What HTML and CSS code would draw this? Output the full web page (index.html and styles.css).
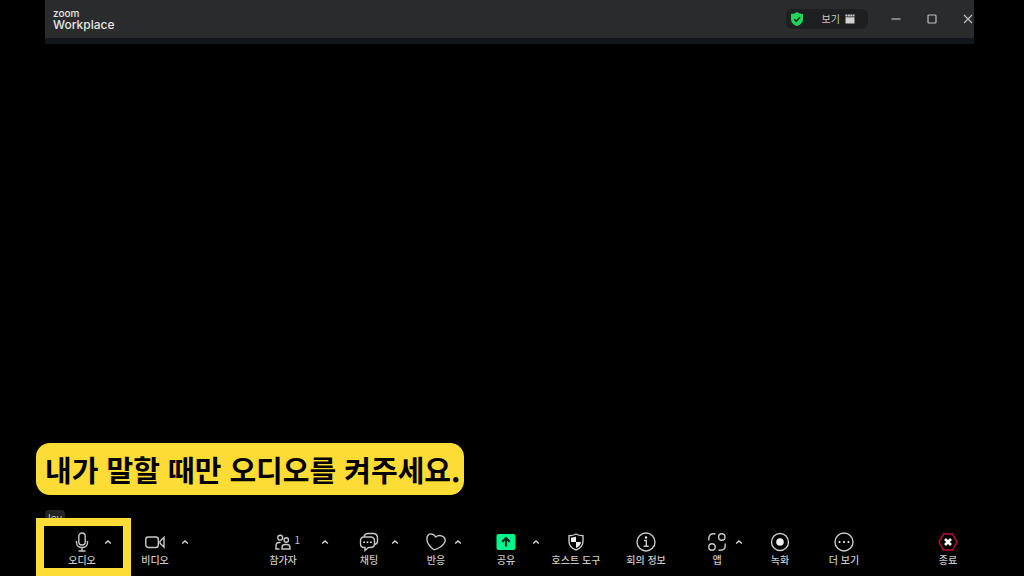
FILE: index.html
```html
<!DOCTYPE html>
<html lang="ko">
<head>
<meta charset="utf-8">
<meta name="viewport" content="width=device-width, initial-scale=1">
<title>Zoom Workplace</title>
<link rel="stylesheet" href="styles.css">
</head>
<body>
<div class="window">
  <header class="titlebar">
    <div class="brand"><span class="brand-zoom">zoom</span><span class="brand-name">Workplace</span></div>
    <div class="view-pill">
      <svg class="shield" viewBox="0 0 14 14" aria-hidden="true"><path d="M7 0C8.500 1.300 10.500 2 13 2V7C13 10.500 10.500 12.800 7 14C3.500 12.800 1 10.500 1 7V2C3.500 2 5.500 1.300 7 0Z" fill="#22d45b"/><path d="M4.200 7.200L6.300 9.200L10 5.200" fill="none" stroke="#202123" stroke-width="1.500"/></svg>
      <button class="view-button" type="button">보기
        <svg class="view-icon" viewBox="0 0 10 10" aria-hidden="true"><path d="M.5 .5H2.500V2.500H.5ZM3 .5H4.800V2.500H3ZM5.300 .5H7.100V2.500H5.300ZM7.600 .5H9.500V2.500H7.600ZM.5 3.200H9.500V9.500H.5Z" fill="#d2d2d2"/></svg>
      </button>
    </div>
    <div class="window-controls">
      <button type="button" aria-label="최소화"><svg viewBox="0 0 12 12"><path d="M1.500 6H10.500"/></svg></button>
      <button type="button" aria-label="최대화"><svg viewBox="0 0 12 12"><rect x="2" y="2" width="8" height="8" rx="1"/></svg></button>
      <button type="button" aria-label="닫기"><svg viewBox="0 0 12 12"><path d="M2 2L10 10M10 2L2 10"/></svg></button>
    </div>
  </header>
  <main class="stage"><span class="name-tag">Joy</span></main>
  <nav class="toolbar" aria-label="회의 컨트롤">
    <div class="tool">
      <button class="action" type="button"><svg class="icon" viewBox="0 0 20 20"><rect x="6.800" y="1" width="6.400" height="12" rx="3.200"/><path d="M4.500 9V10.500C4.500 13.500 7 15.500 10 15.500S15.500 13.500 15.500 10.500V9M10 15.500V19M6.500 19H13.500"/></svg>오디오</button>
      <button class="more" type="button" aria-label="오디오 옵션"><svg viewBox="0 0 8 8"><path d="M1.200 5.500L4 3L6.800 5.500"/></svg></button>
    </div>
    <div class="tool tool-loose">
      <button class="action" type="button"><svg class="icon" viewBox="0 0 20 20"><rect x=".8" y="5" width="12.500" height="10.500" rx="2.500"/><path d="M15 9.300L19 5.500V15L15 11.200Z"/></svg>비디오</button>
      <button class="more" type="button" aria-label="비디오 옵션"><svg viewBox="0 0 8 8"><path d="M1.200 5.500L4 3L6.800 5.500"/></svg></button>
    </div>
    <div class="tool tool-wide">
      <button class="action" type="button"><svg class="icon" viewBox="0 0 20 20"><circle cx="7.200" cy="5.700" r="2.400"/><circle cx="13.300" cy="8" r="2.200"/><path d="M7.500 10.500H6C4 10.500 3 12 3 14V17H6.500M9 17V15.500C9 13.500 10.300 12.500 12 12.500H14C16 12.500 17 13.800 17 15.500V17Z"/></svg><span class="count">1</span>참가자</button>
      <button class="more" type="button" aria-label="참가자 옵션"><svg viewBox="0 0 8 8"><path d="M1.200 5.500L4 3L6.800 5.500"/></svg></button>
    </div>
    <div class="tool">
      <button class="action" type="button"><svg class="icon" viewBox="0 0 20 20"><path d="M5 4.500C5.500 2.500 7 1.500 9 1.500H14C17 1.500 18.500 3 18.500 6V9C18.500 11 17.500 12 16 12.500M5 5H11.500C14 5 15.500 6.500 15.500 9V11.500C15.500 14 14 15.500 11.500 15.500H9.500L6 18.500V15.500H5C2.500 15.500 1.500 14 1.500 11.500V9C1.500 6.500 2.500 5 5 5Z"/><path class="solid" d="M4.300 9.500H5.900V11.100H4.300ZM7.700 9.500H9.300V11.100H7.700ZM11.100 9.500H12.700V11.100H11.100Z"/></svg>채팅</button>
      <button class="more" type="button" aria-label="채팅 옵션"><svg viewBox="0 0 8 8"><path d="M1.200 5.500L4 3L6.800 5.500"/></svg></button>
    </div>
    <div class="tool tool-tight">
      <button class="action" type="button"><svg class="icon" viewBox="0 0 20 20"><path d="M8 17.800C4 15 1 11 .9 7C.8 3.500 3 1.500 5.500 2C7.700 2.300 8.800 3.500 9.700 5C11.500 3.500 13.500 3.200 15.500 3.800C18.500 4.700 20 7.500 18.700 10.200C17 13.800 12.500 16.500 8 17.800Z"/></svg>반응</button>
      <button class="more" type="button" aria-label="반응 옵션"><svg viewBox="0 0 8 8"><path d="M1.200 5.500L4 3L6.800 5.500"/></svg></button>
    </div>
    <div class="tool tool-loose">
      <button class="action" type="button"><svg class="icon" viewBox="0 0 20 20"><rect class="share-fill" x=".5" y="2" width="19" height="16" rx="2"/><path class="share-arrow" d="M10 14.500V6.500M6.300 9.700L10 6L13.700 9.700"/></svg>공유</button>
      <button class="more" type="button" aria-label="공유 옵션"><svg viewBox="0 0 8 8"><path d="M1.200 5.500L4 3L6.800 5.500"/></svg></button>
    </div>
    <div class="tool">
      <button class="action action-host" type="button"><svg class="icon" viewBox="0 0 20 20"><path d="M10 2C12 3.300 14.300 3.700 17 3.800V9C17 13.500 14 16.500 10 18C6 16.500 3 13.500 3 9V3.800C5.700 3.700 8 3.300 10 2Z"/><path class="solid" d="M10 4.500V10H5V5.500C7 5.400 8.500 5.100 10 4.500ZM10 10H15C14.800 12.700 13 14.800 10 16Z"/></svg>호스트 도구</button>
    </div>
    <div class="tool">
      <button class="action action-info" type="button"><svg class="icon" viewBox="0 0 20 20"><circle cx="10" cy="10" r="9"/><path d="M8 8.500H10.300V14M7.500 14.300H12.700"/><circle class="solid" cx="10" cy="5.500" r="1.200"/></svg>회의 정보</button>
    </div>
    <div class="tool tool-tight">
      <button class="action" type="button"><svg class="icon" viewBox="0 0 20 20"><circle cx="14.800" cy="5" r="3.200"/><circle cx="5" cy="15" r="3.200"/><path d="M1.800 8.500V6.500C1.800 3.500 3.500 1.800 6.500 1.800H8.500M18.200 11.500V13.500C18.200 16.500 16.500 18.200 13.500 18.200H11.500"/></svg>앱</button>
      <button class="more" type="button" aria-label="앱 옵션"><svg viewBox="0 0 8 8"><path d="M1.200 5.500L4 3L6.800 5.500"/></svg></button>
    </div>
    <div class="tool">
      <button class="action" type="button"><svg class="icon" viewBox="0 0 20 20"><circle cx="10" cy="10" r="8.500"/><circle class="solid" cx="10" cy="10" r="3.800"/></svg>녹화</button>
    </div>
    <div class="tool">
      <button class="action" type="button"><svg class="icon" viewBox="0 0 20 20"><circle cx="10" cy="10" r="9"/><circle class="solid" cx="5.500" cy="10" r="1.100"/><circle class="solid" cx="10" cy="10" r="1.100"/><circle class="solid" cx="14.500" cy="10" r="1.100"/></svg>더 보기</button>
    </div>
    <div class="tool">
      <button class="action" type="button"><svg class="icon" viewBox="0 0 20 20"><path class="end-ring" d="M5.500 2H14.500L19 10L14.500 18H5.500L1 10Z"/><path class="end-cross" d="M7 7L13 13M13 7L7 13"/></svg>종료</button>
    </div>
  </nav>
</div>
<div class="guide">
  <p class="caption">내가 말할 때만 오디오를 켜주세요.</p>
  <div class="highlight"></div>
</div>
</body>
</html>
```
FILE: styles.css
```css
* { box-sizing: border-box; }

body {
  margin: 0;
  background: #000;
  color: #c9c9c9;
  font-family: "Noto Sans CJK KR", sans-serif;
}

button {
  padding: 0;
  border: 0;
  background: none;
  color: inherit;
  font: inherit;
}

svg { display: block; }

.window {
  display: flex;
  flex-direction: column;
  min-height: 100vh;
  margin: 0 50px 0 45px;
}

.titlebar {
  display: flex;
  align-items: center;
  height: 44px;
  padding-left: 8px;
  background: #2a2b2d;
  border-bottom: 6px solid #12161a;
}

.brand {
  display: flex;
  flex-direction: column;
  margin-right: auto;
  padding-top: 2px;
  color: #e6e6e6;
  font-family: Inter, sans-serif;
  font-weight: 500;
}

.brand-zoom { font-size: 10px; line-height: 10px; }
.brand-name { font-size: 12px; line-height: 14px; }

.view-pill {
  display: flex;
  align-items: center;
  justify-content: space-between;
  width: 82px;
  height: 20px;
  margin-right: 22px;
  padding: 0 13px 0 4px;
  border-radius: 6px;
  background: #1e1f21;
}

.shield { width: 14px; height: 14px; }

.view-button {
  display: flex;
  align-items: center;
  gap: 5px;
  font-size: 10px;
  line-height: 16px;
}

.view-icon { width: 10px; height: 10px; }

.window-controls { display: flex; gap: 24px; }

.window-controls svg {
  width: 12px;
  height: 12px;
  fill: none;
  stroke: #bebebe;
  stroke-width: 1.2;
}

.stage {
  display: flex;
  flex: 1;
  align-items: flex-end;
}

.name-tag {
  padding: 0 3px;
  border-radius: 4px;
  background: #232323;
  font-family: "Open Sans", sans-serif;
  font-size: 10px;
  line-height: 16px;
}

.toolbar {
  display: grid;
  grid-template-columns: 73fr 128fr 86fr 67fr 70fr 60fr 75fr 76fr 63fr 64fr 104fr 41fr;
  padding: 6px 0 9px 22px;
}

.tool {
  display: flex;
  align-items: flex-start;
  gap: 4px;
  min-width: 0;
}

.tool-tight { gap: 0; }
.tool-loose { gap: 8px; }
.tool-wide { gap: 20px; }

.action {
  position: relative;
  display: flex;
  flex: none;
  flex-direction: column;
  align-items: center;
  width: 30px;
  font-size: 10px;
  font-weight: 500;
  line-height: 15px;
  white-space: nowrap;
}

.action-host { width: 50px; }
.action-info { width: 40px; }

.icon {
  width: 20px;
  height: 20px;
  fill: none;
  stroke: #c9c9c9;
  stroke-width: 1.4;
}

.icon .solid { fill: #eee; stroke: none; }
.icon .share-fill { fill: #00f78b; stroke: none; }
.icon .share-arrow { stroke: #05251a; stroke-width: 2.2; }
.icon .end-ring { stroke: #c00b3e; }
.icon .end-cross { stroke: #fff; stroke-width: 2.6; }

.count {
  position: absolute;
  top: 0;
  right: -2px;
  font-weight: 400;
}

.more {
  display: flex;
  align-items: center;
  justify-content: center;
  width: 14px;
  height: 20px;
}

.more svg {
  width: 8px;
  height: 8px;
  fill: none;
  stroke: #d6d6d6;
  stroke-width: 1.5;
}

.guide {
  position: absolute;
  bottom: 0;
  left: 36px;
  display: flex;
  flex-direction: column;
  align-items: flex-start;
  gap: 23px;
  pointer-events: none;
}

.caption {
  margin: 0;
  padding: 0 4px 0 9px;
  border-radius: 14px;
  background: #fddd35;
  color: #000;
  font-size: 29px;
  font-weight: 700;
  line-height: 52px;
}

.highlight {
  width: 95px;
  height: 58px;
  border: 8px solid #fddd35;
}
```
